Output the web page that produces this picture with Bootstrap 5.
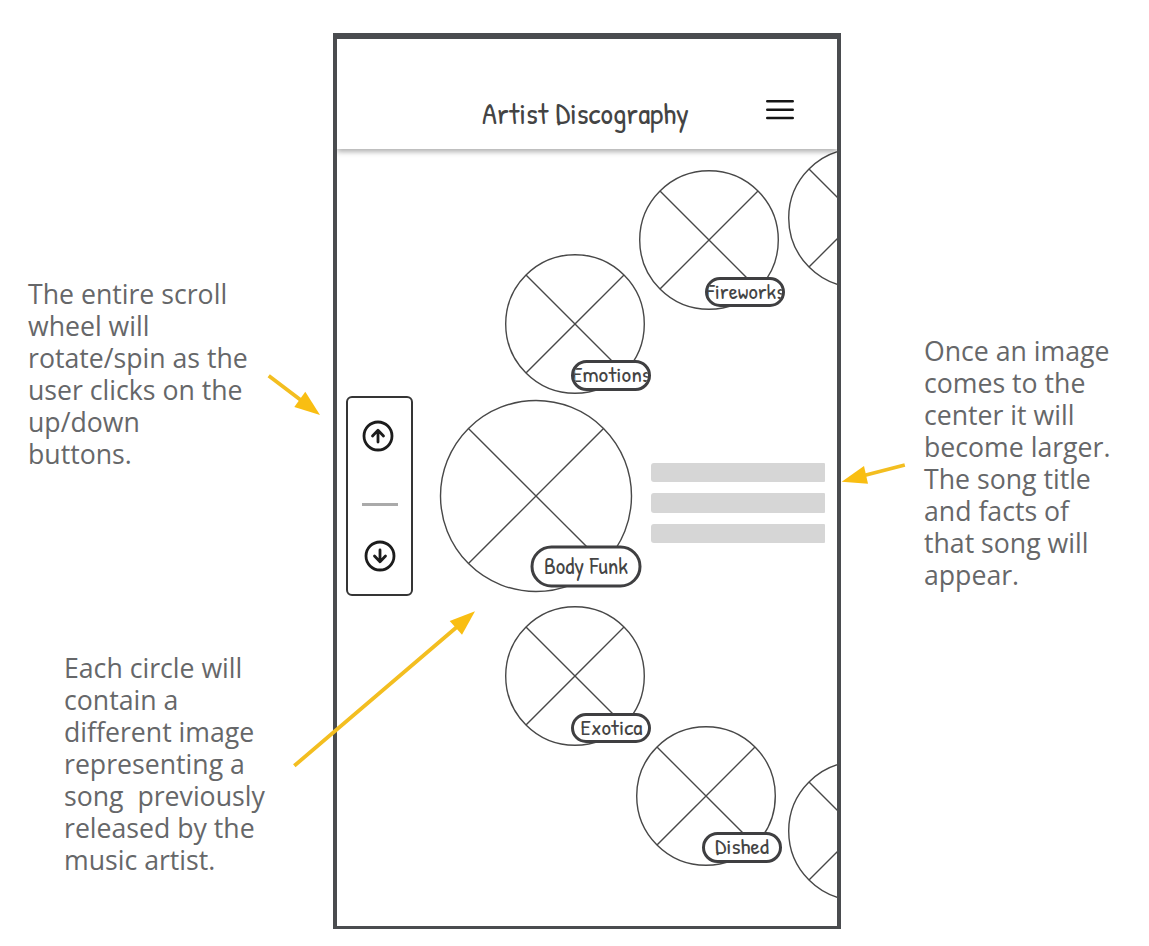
<!DOCTYPE html>
<html lang="en">
<head>
    <meta charset="UTF-8">
    <meta name="viewport" content="width=device-width, initial-scale=1.0">
    <title>Artist Discography</title>
    <link href="https://cdn.jsdelivr.net/npm/bootstrap@5.3.0/dist/css/bootstrap.min.css" rel="stylesheet">
    <style>
    body {
        background: #fff;
        height: 946px;
        overflow: hidden;
    }
    .board {
        width: 1149px;
        height: 946px;
    }
    .notes-left {
        width: 333px;
        padding: 278px 0 0 28px;
        gap: 182px;
    }
    .notes-right {
        padding: 335px 0 0 83px;
    }
    .note {
        font-family: "Open Sans", sans-serif;
        font-size: 26.67px;
        line-height: 32px;
        color: #666769;
        white-space: nowrap;
    }
    .note-songs {
        margin-left: 36px;
    }
    .phone {
        width: 508px;
        height: 896px;
        margin-top: 33px;
        border: 4px solid #4a4c4f;
        border-top-width: 6px;
        border-bottom-width: 3px;
    }
    .phone-header {
        height: 110px;
        padding: 0 43px 0 145px;
        box-shadow: 0 3px 5px rgba(0, 0, 0, 0.3);
        clip-path: inset(0 0 -10px 0);
        z-index: 1;
    }
    .sketch-font {
        font-family: "Patrick Hand", Lato, sans-serif;
        white-space: nowrap;
    }
    .sketch-font text {
        fill: #444;
    }
    .phone-title {
        font-size: 30px;
        margin-top: 58px;
    }
    .menu-btn {
        margin-top: 60px;
    }
    .wheel {
        height: 777px;
    }
    .controls {
        width: 67px;
        height: 200px;
        margin: 247px 0 0 9px;
        border: 2px solid #353535;
        border-radius: 6px;
        padding: 21px 0 21px 13px;
    }
    .controls hr {
        width: 36px;
        height: 3px;
        margin: 16px 0 0 1px;
        border: 0;
        background: #aaa;
        opacity: 1;
    }
    .facts {
        width: 174px;
        gap: 11px;
        margin: 313.5px 12.5px 0 0;
    }
    .facts div {
        height: 19.5px;
        background: #d6d6d6;
        border-radius: 3px 1px 1px 3px;
    }
    .disc {
        width: 140px;
        height: 140px;
        transform: translate(-50%, -50%);
    }
    .disc.current {
        width: 193px;
        height: 193px;
    }
    .disc > svg {
        overflow: visible;
    }
    .pill {
        left: 66px;
        top: 106.5px;
        width: 80px;
        height: 30.5px;
        background: #fff;
        border: 3px solid #3f3f41;
        border-radius: 16px;
        font-size: 22px;
    }
    .current .pill {
        left: 90.5px;
        top: 146.5px;
        width: 111px;
        height: 42px;
        border-radius: 21px;
        font-size: 22.5px;
    }
    .arrows {
        z-index: 2;
        pointer-events: none;
    }
    </style>
</head>
<body>

    <div class="board d-flex align-items-start position-relative">

        <!-- Left notes -->
        <div class="notes-left d-flex flex-column flex-shrink-0">
            <div class="note">The entire scroll<br>wheel will<br>rotate/spin as the<br>user clicks on the<br>up/down<br>buttons.</div>
            <div class="note note-songs">Each circle will<br>contain a<br>different image<br>representing a<br>song&nbsp; previously<br>released by the<br>music artist.</div>
        </div>

        <!-- Phone -->
        <div class="phone flex-shrink-0">
            <div class="phone-header d-flex justify-content-between align-items-start position-relative bg-white">
                <div class="phone-title sketch-font">
                    <svg class="d-block" width="212" height="42" overflow="visible"><text x="0" y="26.5" textLength="207" lengthAdjust="spacingAndGlyphs">Artist Discography</text></svg>
                </div>
                <svg class="menu-btn" width="28" height="22" stroke="#151515" stroke-width="2.6" stroke-linecap="round">
                    <path d="M1.3 2.3H26.7M1.3 10.7H26.7M1.3 19H26.7"/>
                </svg>
            </div>

            <div class="wheel position-relative overflow-hidden">
                <div class="d-flex justify-content-between align-items-start">
                    <!-- Up / down buttons -->
                    <div class="controls d-flex flex-column justify-content-between">
                        <svg width="34" height="34" viewBox="-17 -17 34 34" fill="none" stroke="#1c1c1c" stroke-width="2.8" stroke-linecap="round" stroke-linejoin="round">
                            <circle r="14"/>
                            <path d="M0 6V-5.5M-5.5 0L0 -5.8L5.5 0"/>
                        </svg>
                        <hr>
                        <svg width="36" height="34" viewBox="-19 -17 36 34" fill="none" stroke="#1c1c1c" stroke-width="2.8" stroke-linecap="round" stroke-linejoin="round">
                            <circle r="14"/>
                            <path d="M0 -6V5.5M-5.5 0L0 5.8L5.5 0"/>
                        </svg>
                    </div>

                    <!-- Song facts -->
                    <div class="facts d-flex flex-column">
                        <div></div>
                        <div></div>
                        <div></div>
                    </div>
                </div>

                <div id="discs"></div>
            </div>
        </div>

        <!-- Right note -->
        <div class="notes-right">
            <div class="note">Once an image<br>comes to the<br>center it will<br>become larger.<br>The song title<br>and facts of<br>that song will<br>appear.</div>
        </div>

        <!-- Arrows from the notes to the phone -->
        <svg class="arrows position-absolute top-0 start-0" width="1149" height="946" fill="#f9be12" stroke="none">
            <path d="M268.7 375.8L302 401M294.3 765.8L458 626M904.8 465L864 475.5" stroke="#f3be20" stroke-width="3.8"/>
            <path d="M320 415L305.3 391.7L294.3 407Z"/>
            <path d="M475 611.3L449.7 621L462 634.7Z"/>
            <path d="M841.7 481.7L864 466L868 483.7Z"/>
        </svg>
    </div>

    <script src="https://cdn.jsdelivr.net/npm/bootstrap@5.3.0/dist/js/bootstrap.bundle.min.js"></script>
    <script>
// centre of each disc on the wheel, tx / tw = start and width of the song title
const songs = [
    { x: 521, y: 69 },
    { x: 371.5, y: 91, title: "Fireworks", tx: -2, tw: 79 },
    { x: 238, y: 174.5, title: "Emotions", tx: -2, tw: 79 },
    { x: 199, y: 346.7, title: "Body Funk", tx: 10.5, tw: 84, current: true },
    { x: 238, y: 527.3, title: "Exotica", tx: 6.5, tw: 62 },
    { x: 369, y: 646.7, title: "Dished", tx: 10, tw: 54 },
    { x: 521, y: 681.5 }
];

document.getElementById("discs").innerHTML = songs.map(song => {
    const r = song.current ? 95.5 : 69.3;
    const d = r * Math.SQRT1_2;
    const half = song.current ? 96.5 : 70;
    const base = song.current ? 25.6 : 18.6;
    const pill = song.title ? `
        <div class="pill sketch-font position-absolute overflow-hidden">
            <svg class="d-block" width="100%" height="100%" overflow="visible"><text x="${song.tx}" y="${base}" textLength="${song.tw}" lengthAdjust="spacingAndGlyphs">${song.title}</text></svg>
        </div>` : "";
    return `<div class="disc position-absolute ${song.current ? "current" : ""}" style="left:${song.x}px;top:${song.y}px">
        <svg class="d-block" width="100%" height="100%" viewBox="${-half} ${-half} ${half * 2} ${half * 2}" fill="none" stroke="#484848" stroke-width="1.4">
            <circle r="${r}"/>
            <path d="M${-d} ${-d}L${d} ${d}M${d} ${-d}L${-d} ${d}"/>
        </svg>${pill}
    </div>`;
}).join("");
    </script>
</body>
</html>
